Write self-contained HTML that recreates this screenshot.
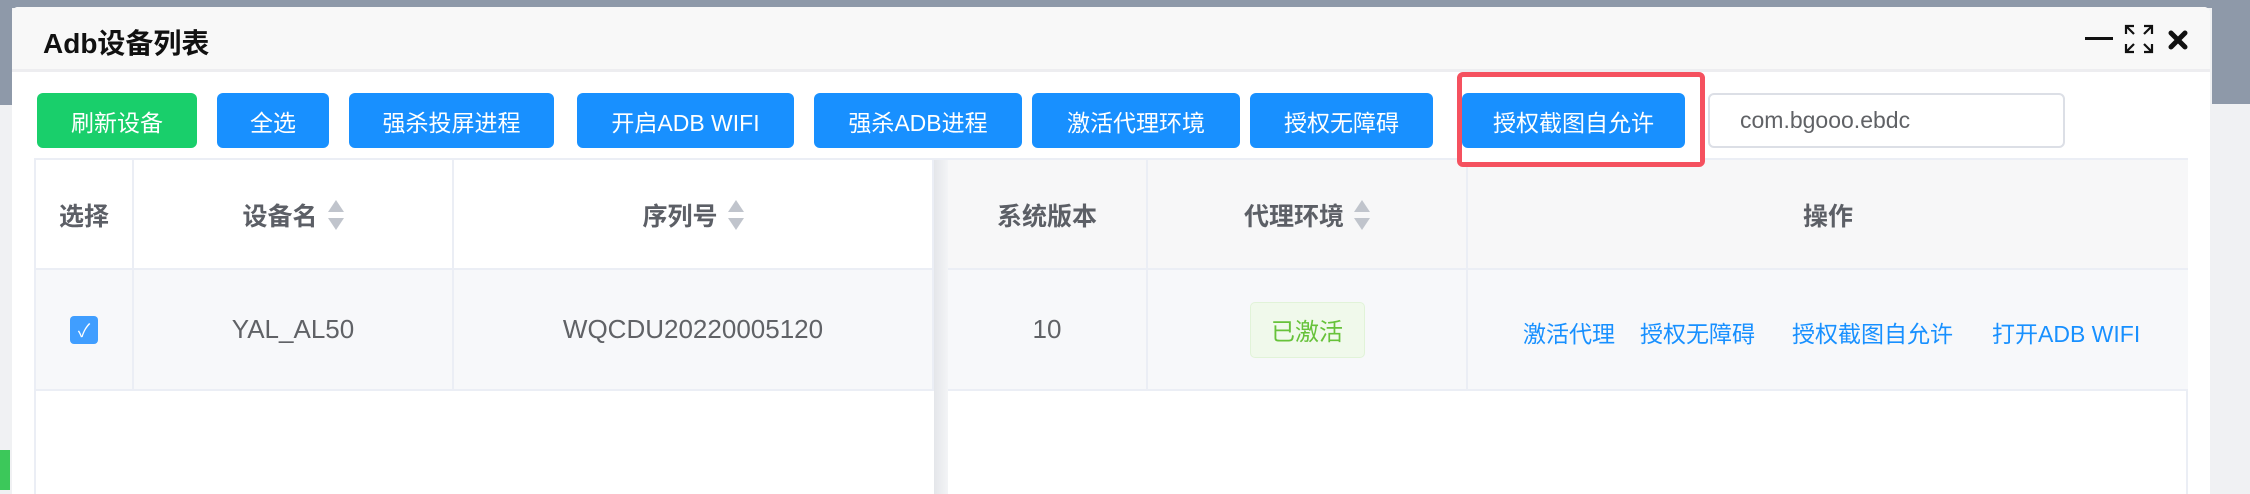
<!DOCTYPE html>
<html><head><meta charset="utf-8"><style>
*{margin:0;padding:0;box-sizing:border-box}
body{width:2250px;height:494px;overflow:hidden;background:#f0f1f3;font-family:"Liberation Sans","Noto Sans CJK SC",sans-serif;position:relative}
.abs{position:absolute}
.btn{position:absolute;top:93px;height:55px;border-radius:6px;background:#1890ff;color:#fff;font-size:23px;display:flex;align-items:center;justify-content:center}
.th,.td{position:absolute;display:flex;align-items:center;justify-content:center;border-right:2px solid #ebeef5}
.th{top:160px;height:110px;font-size:25px;font-weight:bold;color:#5c5f66}
.td{top:270px;height:119px;font-size:26px;color:#606266;background:#f7f8fa}
.sort{display:inline-block;margin-left:10px;width:16px;height:30px;position:relative}
.sort:before{content:"";position:absolute;left:0;top:0;border:8px solid transparent;border-bottom:12px solid #c0c4cc;border-top:0}
.sort:after{content:"";position:absolute;left:0;bottom:0;border:8px solid transparent;border-top:12px solid #c0c4cc;border-bottom:0}
.lk{color:#1890ff;font-size:23px;position:absolute;top:315px}
</style></head><body>
<div class="abs" style="left:0;top:0;width:2250px;height:8px;background:#8e99a9"></div>
<div class="abs" style="left:0;top:0;width:12px;height:105px;background:#8e99a9"></div>
<div class="abs" style="left:2212px;top:0;width:38px;height:104px;background:#8e99a9"></div>
<div class="abs" style="left:0;top:450px;width:10px;height:40px;background:#3cc85a"></div>
<div class="abs" style="left:12px;top:7px;width:2198px;height:487px;background:#fff;border-radius:6px 6px 0 0"></div>
<div class="abs" style="left:12px;top:7px;width:2198px;height:65px;background:#f8f8f8;border-bottom:3px solid #ededf0;border-radius:6px 6px 0 0"></div>
<div class="abs" style="left:43px;top:22px;font-size:28px;font-weight:bold;color:#111">Adb设备列表</div>
<div class="abs" style="left:2085px;top:37px;width:28px;height:3px;background:#111"></div>
<svg class="abs" style="left:2124px;top:24px" width="30" height="30" viewBox="0 0 30 30" fill="none" stroke="#111" stroke-width="2.2"><path d="M2 10V2h8M2 2l8 8M28 10V2h-8M28 2l-8 8M2 20v8h8M2 28l8-8M28 20v8h-8M28 28l-8-8"/></svg>
<svg class="abs" style="left:2168px;top:30px" width="20" height="20" viewBox="0 0 20 20" stroke="#111" stroke-width="5" stroke-linecap="round"><path d="M3 3l14 14M17 3L3 17"/></svg>
<div class="btn" style="left:37px;width:160px;background:#19cf6b">刷新设备</div>
<div class="btn" style="left:217px;width:112px">全选</div>
<div class="btn" style="left:349px;width:205px">强杀投屏进程</div>
<div class="btn" style="left:577px;width:217px">开启ADB WIFI</div>
<div class="btn" style="left:814px;width:208px">强杀ADB进程</div>
<div class="btn" style="left:1032px;width:208px">激活代理环境</div>
<div class="btn" style="left:1250px;width:183px">授权无障碍</div>
<div class="btn" style="left:1462px;width:223px">授权截图自允许</div>
<div class="abs" style="left:1708px;top:93px;width:357px;height:55px;border:2px solid #dcdfe6;border-radius:6px;font-size:23px;color:#606266;padding-left:30px;line-height:51px">com.bgooo.ebdc</div>
<div class="abs" style="left:34px;top:158px;width:2154px;height:336px;border:2px solid #ebeef5;border-bottom:0"></div>
<div class="abs" style="left:36px;top:160px;width:2152px;height:110px;background:#f7f7f8"></div>
<div class="abs" style="left:36px;top:160px;width:898px;height:110px;background:#fff"></div>
<div class="abs" style="left:36px;top:268px;width:2152px;height:2px;background:#ebeef5"></div>
<div class="abs" style="left:36px;top:389px;width:2152px;height:2px;background:#ebeef5"></div>
<div class="th" style="left:36px;width:98px">选择</div>
<div class="th" style="left:134px;width:320px">设备名<span class="sort"></span></div>
<div class="th" style="left:454px;width:480px">序列号<span class="sort"></span></div>
<div class="th" style="left:948px;width:200px">系统版本</div>
<div class="th" style="left:1148px;width:320px">代理环境<span class="sort"></span></div>
<div class="th" style="left:1468px;width:720px;border-right:0">操作</div>
<div class="td" style="left:36px;width:98px"><div style="width:28px;height:28px;background:#409eff;border-radius:4px;color:#fff;font-size:18px;display:flex;align-items:center;justify-content:center">✓</div></div>
<div class="td" style="left:134px;width:320px">YAL_AL50</div>
<div class="td" style="left:454px;width:480px">WQCDU20220005120</div>
<div class="td" style="left:948px;width:200px">10</div>
<div class="td" style="left:1148px;width:320px"><div style="width:115px;height:56px;background:#f0f9eb;border:1px solid #e1f3d8;border-radius:5px;color:#67c23a;font-size:24px;display:flex;align-items:center;justify-content:center">已激活</div></div>
<div class="td" style="left:1468px;width:720px;border-right:0"></div>
<div class="abs" style="left:934px;top:160px;width:14px;height:334px;background:linear-gradient(90deg,#e4e6ea,#f3f4f6)"></div>
<div class="lk" style="left:1523px">激活代理</div>
<div class="lk" style="left:1640px">授权无障碍</div>
<div class="lk" style="left:1792px">授权截图自允许</div>
<div class="lk" style="left:1992px">打开ADB WIFI</div>
<div class="abs" style="left:1457px;top:72px;width:248px;height:95px;border:5px solid #f5515f;border-radius:6px;background:transparent"></div>
<div class="abs" style="left:1462px;top:152px;width:238px;height:10px;background:#fff"></div>
</body></html>
